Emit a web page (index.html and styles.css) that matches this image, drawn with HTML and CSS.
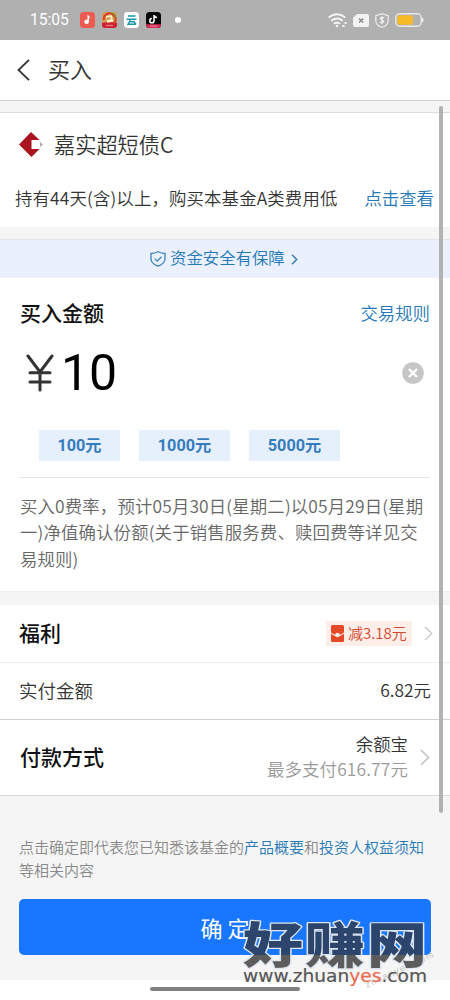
FILE: index.html
```html
<!DOCTYPE html>
<html lang="zh-CN">
<head>
<meta charset="utf-8">
<title>买入</title>
<link rel="stylesheet" href="styles.css">
</head>
<body>
<div class="phone">
  <header class="status">
    <span class="clock">15:05</span>
    <div class="apps">
      <svg width="15" height="16" viewBox="0 0 15 16"><rect width="15" height="16" rx="3.5" fill="#ed5b50"/><circle cx="6.6" cy="9.8" r="2.3" fill="#fff"/><path d="M8.2 10V4.2l1.6 1.3" stroke="#fff" stroke-width="1.4" fill="none"/></svg>
      <svg width="15" height="16" viewBox="0 0 15 16"><rect width="15" height="16" rx="3" fill="#d9a058"/><path d="M0 11q7-2 15 0v2q0 3-3 3H3q-3 0-3-3z" fill="#cf2134"/><path d="M2 8C1 3 6 0 10 2s5 6 2 9" stroke="#d5402c" stroke-width="2" fill="none"/><path d="M4 5l5-1 1 4-5 1M5 10l6-1" stroke="#fff2c8" stroke-width="1.5" fill="none"/><path d="M9 1q4 0 5 5" stroke="#6f9d3a" stroke-width="1.2" fill="none"/><path d="M4 13.5h7" stroke="#ec7680" stroke-width="1.3"/></svg>
      <svg width="15" height="16" viewBox="0 0 15 16"><rect width="15" height="16" rx="3.5" fill="#fff"/><path d="M4 4h7.5M2.5 7.2h10M6.5 7.5L4 12.2h7.8M9.5 9l2.5 3.5M6 9.7h4" stroke="#1595a7" stroke-width="1.4" fill="none"/></svg>
      <svg width="15" height="16" viewBox="0 0 15 16"><rect width="15" height="16" rx="3.5" fill="#080808"/><path d="M0 12.2h15q0 3.8-3.5 3.8h-8Q0 16 0 12.2z" fill="#d92c56"/><path d="M8 3v5.700a2.100 2.100 0 1 1-2.100-2.100M8 3.200q.6 2.200 3 2.400" stroke="#fff" stroke-width="1.5" fill="none"/><path d="M4 14h7" stroke="#f0889f"/></svg>
    </div>
    <i class="dot"></i>
    <div class="signals">
      <svg width="19" height="15" viewBox="0 0 19 15" fill="none" stroke="#f5f5f5" stroke-width="1.9"><path d="M.7 4.500q8.300-6.400 16.600 0M3.300 7.800q5.700-4.500 11.400 0M5.900 10.800q3.100-2.200 6.200 0"/><circle cx="9" cy="13" r="1.200" fill="#f5f5f5" stroke="none"/><path d="M14.300 13h2.200M16.600 10h2" stroke-width="1.900"/></svg>
      <svg width="16" height="13" viewBox="0 0 16 13"><path d="M4 0h10q2 0 2 2v9q0 2-2 2H2q-2 0-2-2V4z" fill="#f2f2f2"/><path d="M6 4.400l4.200 4.200M10.200 4.400L6 8.600" stroke="#888" stroke-width="1.400"/></svg>
      <svg width="14" height="15" viewBox="0 0 14 15" fill="none" stroke="#eee" stroke-width="1.200"><path d="M7 .7l6.200 2v5q0 4.500-6.200 6.600Q.8 12.200.8 7.700v-5z"/><path d="M9.200 5.200Q7 3.800 5.500 5c-1 2 3.200 2 3.200 3.800Q7 10.800 4.800 9.300M7 3.200v8" stroke-width="1.300"/></svg>
      <svg width="29" height="14" viewBox="0 0 29 14"><rect x=".8" y=".8" width="25.400" height="12.400" rx="4" fill="none" stroke="#e9e9e9" stroke-width="1.400"/><rect x="2.400" y="2.200" width="15.600" height="9.600" rx="2.500" fill="#f5ba26"/><path d="M27.700 5v4" stroke="#e9e9e9" stroke-width="1.500"/></svg>
    </div>
  </header>

  <nav class="nav">
    <svg width="13" height="22" viewBox="0 0 13 22"><path d="M12 .8L1.500 11 12 21.200" fill="none" stroke="#333" stroke-width="1.800"/></svg>
    <h1>买入</h1>
  </nav>

  <section class="fund">
    <div class="fund-name">
      <svg width="24" height="25" viewBox="0 0 24 25"><path d="M12 0l8.500 8H12.500v9H20.500L12.500 25 0 12.500z" fill="#a91420"/><path d="M21 10l3 2.500-3 2.500z" fill="#b9a5ae"/></svg>
      <span>嘉实超短债C</span>
    </div>
    <div class="fund-tip"><span class="fund-text">持有44天(含)以上，购买本基金A类费用低</span><a>点击查看</a></div>
  </section>

  <div class="safe">
    <svg width="16" height="16" viewBox="0 0 16 16" fill="none" stroke="#3c85ba" stroke-width="1.300"><path d="M8 .8Q11 2.500 15 2.500V8q0 4.500-7 7.200Q1 12.500 1 8V2.500Q5 2.500 8 .8z"/><path d="M4.700 7.600l2.500 2.500L11.500 5.800"/></svg>
    <span>资金安全有保障</span>
    <svg class="safe-arrow" width="7" height="11" viewBox="0 0 7 11"><path d="M1 .8l4.700 4.700L1 10.200" fill="none" stroke="#347fb8" stroke-width="1.500"/></svg>
  </div>

  <section class="amount">
    <div class="amount-head"><h2>买入金额</h2><a>交易规则</a></div>
    <div class="amount-input">
      <svg class="yen" width="28" height="38" viewBox="0 0 28 38" fill="none" stroke="#333" stroke-width="3" stroke-linecap="round"><path d="M2 2L14 18 26 2M14 18V36M4 18.800h20M4 28h20"/></svg>
      <span class="value">10</span>
      <svg class="clear" width="22" height="22" viewBox="0 0 22 22"><circle cx="11" cy="11" r="10.800" fill="#c6c6c6"/><path d="M7 7l8 8M15 7l-8 8" stroke="#fff" stroke-width="2.400"/></svg>
    </div>
    <div class="quick"><b class="small">100元</b><b>1000元</b><b>5000元</b></div>
    <p class="note">买入0费率，预计05月30日(星期二)以05月29日(星期<br>一)净值确认份额(关于销售服务费、赎回费等详见交<br>易规则)</p>
  </section>

  <section class="welfare">
    <h2>福利</h2>
    <span class="coupon"><svg width="13" height="17" viewBox="0 0 13 17"><rect width="13" height="17" rx="1.500" fill="#e64926"/><path d="M0 7.500q6.500 5 13 0v1.300q-6.500 5-13 0z" fill="#ffe6df"/><circle cx="6.500" cy="10" r="2.300" fill="#fff3ef"/></svg><span>减3.18元</span></span>
    <svg class="more" width="9" height="15" viewBox="0 0 9 15"><path d="M1 1l6.800 6.500L1 14" fill="none" stroke="#c9c9c9" stroke-width="1.400"/></svg>
  </section>
  <section class="actual"><span class="actual-label">实付金额</span><span>6.82元</span></section>
  <section class="payment">
    <h2>付款方式</h2>
    <div class="method"><span>余额宝</span><span class="limit">最多支付616.77元</span></div>
    <svg class="more" width="10" height="17" viewBox="0 0 10 17"><path d="M1 1l7.500 7.500L1 16" fill="none" stroke="#c4c4c4" stroke-width="1.600"/></svg>
  </section>

  <footer class="foot">
    <p>点击确定即代表您已知悉该基金的<a>产品概要</a>和<a>投资人权益须知</a><br>等相关内容</p>
    <div class="submit">确 定</div>
  </footer>
  <div class="home"><i></i></div>

  <i class="scrollbar"></i>
  <svg class="watermark" width="200" height="90" viewBox="0 0 200 90">
    <defs><linearGradient id="ink" gradientUnits="userSpaceOnUse" x1="0" y1="-42.500" x2="0" y2="27.500"><stop offset=".47" stop-color="#2c456d"/><stop offset=".47" stop-color="#5c5c5c"/></linearGradient></defs>
    <text class="mark-small" x="0" y="0" transform="translate(127 78) rotate(-25)" textLength="74">zhuanyes.com</text>
    <text class="mark-name" x="0" y="0" transform="translate(3 52.500) scale(1 .81)" textLength="184" lengthAdjust="spacing">好赚网</text>
    <text class="mark-url" x="3" y="72" textLength="184" lengthAdjust="spacingAndGlyphs">www.zhuan<tspan class="yes">yes</tspan>.com</text>
  </svg>
</div>
</body>
</html>
```
FILE: styles.css
```css
* { box-sizing: border-box; }
body { margin: 0; background: #fff; }
.phone {
  position: relative; width: 450px; height: 1000px; overflow: hidden;
  display: flex; flex-direction: column; background: #f5f5f5; color: #333;
  font-family: "Noto Sans CJK SC", sans-serif; font-size: 17.4px; font-weight: 350;
  line-height: 26px; white-space: nowrap;
}
.phone > * { flex-shrink: 0; }
svg { display: block; flex-shrink: 0; }
h1, h2, p { margin: 0; }
h2 { font-size: 21px; font-weight: 500; color: #111; padding-bottom: 3px; }
a { color: #2478b5; }

.status { height: 40px; background: #b0b0b0; display: flex; align-items: center; padding: 0 26px 0 30px; }
.clock { width: 50px; color: #fff; font-family: Roboto, sans-serif; font-size: 15.6px; font-weight: 400; }
.apps { display: flex; gap: 7px; }
.dot { width: 6px; height: 6px; border-radius: 50%; background: #fff; margin-left: 14px; }
.signals { display: flex; align-items: center; margin-left: auto; gap: 6px; }

.nav { height: 61px; background: #fff; border-bottom: 1px solid #ccc; display: flex; align-items: center; gap: 18px; padding-left: 17px; }
.nav h1 { font-size: 22px; font-weight: 350; padding-bottom: 4px; }

.fund { height: 115px; margin-top: 11px; background: #fff; border-top: 1px solid #ddd; padding: 18px 16px 0 15px; }
.fund-name { display: flex; align-items: center; height: 26px; gap: 11px; padding-left: 4px; font-size: 21.2px; line-height: 28px; }
.fund-tip { display: flex; justify-content: space-between; margin-top: 28px; }
.fund-text { letter-spacing: .15px; }

.safe { height: 39px; margin-top: 12px; background: #eaf0fe; border-top: 1px solid #e0e4ec; display: flex; align-items: center; padding-left: 150px; font-size: 16.4px; color: #2478b5; gap: 4px; }
.safe span { padding-bottom: 4px; }
.safe-arrow { margin-left: 2px; }

.amount { height: 314px; background: #fff; padding: 22px 20px 0 20px; border-bottom: 1px solid #eee; }
.amount-head { display: flex; justify-content: space-between; align-items: center; height: 28px; }
.amount-head h2 { padding-bottom: 4px; }
.amount-head a { padding-bottom: 2px; }
.amount-input { display: flex; align-items: center; height: 60px; margin-top: 15px; padding: 0 6px; }
.value { font-family: Roboto, sans-serif; font-size: 50px; font-weight: 400; color: #000; line-height: 60px; margin-left: 7px; }
.clear { margin-left: auto; }
.quick { display: flex; gap: 19px; height: 75px; padding: 27px 0 0 19px; border-bottom: 1px solid #e5e5e5; }
.quick b { width: 91px; height: 31px; background: #e6effc; color: #347bbd; font-family: Roboto, "Noto Sans CJK SC", sans-serif; font-size: 16.2px; font-weight: 700; line-height: 31px; text-align: center; }
.quick .small { width: 81px; }
.note { padding-top: 15px; line-height: 26.4px; color: #666; letter-spacing: .15px; }

.welfare { height: 58px; margin-top: 13px; background: #fff; border-bottom: 1px solid #eee; display: flex; align-items: center; padding: 0 17px 0 19px; }
.coupon { display: flex; align-items: center; gap: 4px; width: 86px; height: 25px; margin-left: auto; padding-left: 5px; background: #fdeeea; color: #d4482d; font-size: 15px; }
.coupon span { padding-bottom: 2px; }
.more { margin-left: 12px; }
.actual { height: 57px; background: #fff; border-bottom: 1px solid #d2d2d2; display: flex; align-items: center; justify-content: space-between; padding: 0 19px 2px; }
.actual-label { font-size: 18.5px; }
.payment { height: 76px; background: #fff; border-bottom: 1px solid #d8d8d8; display: flex; align-items: center; padding: 0 20px; }
.method { display: flex; flex-direction: column; align-items: flex-end; margin-left: auto; padding-bottom: 3px; line-height: 25px; }
.limit { color: #999; letter-spacing: .15px; }

.foot { height: 184px; padding: 39px 19px 0; }
.foot p { font-size: 15px; line-height: 23px; color: #888; }
.submit { height: 56px; margin-top: 18px; border-radius: 5px; background: #1877fe; color: #fff; font-size: 22px; font-weight: 400; line-height: 57px; text-align: center; }
.home { height: 20px; background: #fff; display: flex; justify-content: center; padding-top: 7px; }
.home i { width: 150px; height: 4px; border-radius: 2px; background: #808080; }

.scrollbar { position: absolute; left: 439px; top: 106px; width: 4px; height: 707px; border-radius: 2px; background: #b2b2b2; }
.watermark { position: absolute; left: 240px; top: 910px; overflow: visible; }
.mark-name { font-family: "Noto Sans CJK SC", sans-serif; font-size: 60px; font-weight: 900; fill: url(#ink); stroke: #dce4ee; stroke-width: 3px; paint-order: stroke; stroke-linejoin: round; }
.mark-url { font-family: "DejaVu Sans", sans-serif; font-size: 17px; font-weight: 400; fill: #575757; stroke: #575757; stroke-width: .2px; }
.mark-url .yes { fill: #ed6b50; stroke: #ed6b50; }
.mark-small { font-family: "Liberation Sans", sans-serif; font-size: 9px; fill: #c4c4c4; }
```
